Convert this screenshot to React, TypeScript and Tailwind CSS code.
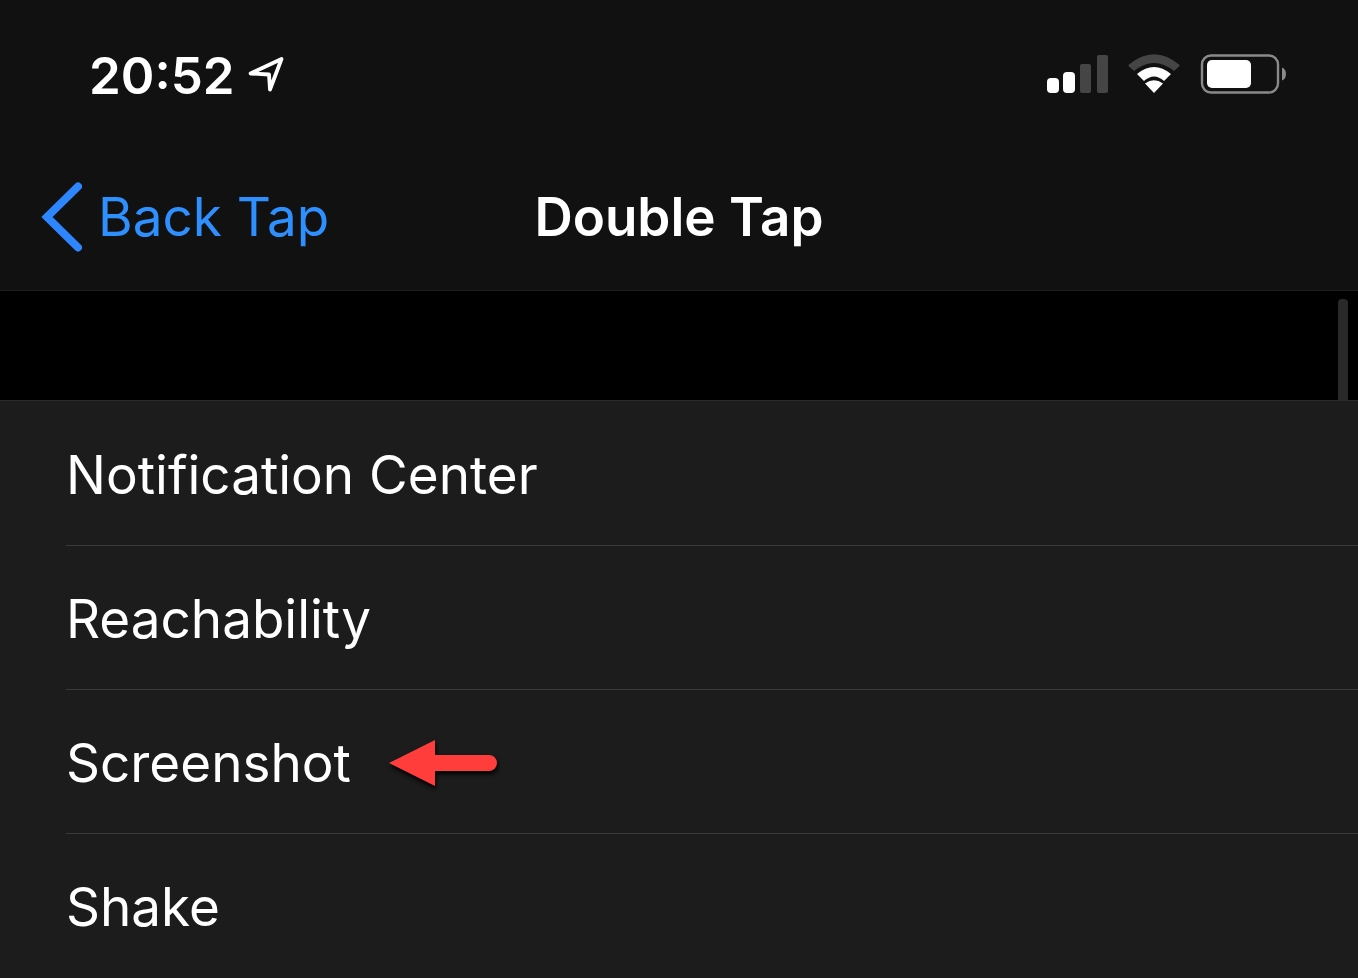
import React from 'react';

type RowProps = {
    label: string;
    first?: boolean;
    marked?: boolean;
};

const StatusIcons: React.FC = () => (
    <div className="flex items-center gap-5">
        <svg className="h-10 w-[62px]" viewBox="0 0 62 40" role="img" aria-label="Signal">
            <rect x="1" y="24" width="12" height="15" rx="4" fill="#fff" />
            <rect x="17" y="18" width="12" height="21" rx="4" fill="#fff" />
            <rect x="34" y="10" width="11" height="29" rx="2" fill="#454545" />
            <rect x="51" y="1" width="11" height="38" rx="2" fill="#454545" />
        </svg>
        <svg className="h-10 w-[52px]" viewBox="0 0 52 40" role="img" aria-label="Wi-Fi">
            <path d="M1 10.5 Q26 -10 51 10.5 Q52 11.5 51 12.5 L46 17 Q26 1 6 17 L1 12.5 Q0 11.5 1 10.5 Z" fill="#454545" />
            <path d="M9 20 Q26 6 43 20 L36 27 Q26 18 16 27 Z" fill="#fff" />
            <path d="M17 29.5 Q26 23 35 29.5 L26 39 Z" fill="#fff" />
        </svg>
        <svg className="h-10 w-[87px]" viewBox="0 0 87 40" role="img" aria-label="Battery">
            <rect x="2" y="1.5" width="76" height="37" rx="9" fill="none" stroke="#8a8a8a" strokeWidth="2.4" />
            <rect x="7" y="6" width="44" height="28" rx="5" fill="#fff" />
            <path d="M82 13.5 Q86 15 86 20 Q86 25 82 26.5 Z" fill="#8a8a8a" />
        </svg>
    </div>
);

const Row: React.FC<RowProps> = (props) => (
    <li className="pl-[66px]">
        <button
            type="button"
            className={`flex h-36 w-full items-center gap-[38px] border-t pt-1 text-left ${props.first ? "border-transparent" : "border-[#3a3a39]"}`}
        >
            <span>{props.label}</span>
            {props.marked && (
                <svg className="h-12 w-[110px] drop-shadow-[1px_3px_2px_#000000]" viewBox="0 0 110 48" aria-hidden="true">
                    <path d="M0 23 L46 0 V15 H100 A8 8 0 0 1 100 31 H46 V46 Z" fill="#ff3e3b" />
                </svg>
            )}
        </button>
    </li>
);

const App: React.FC = () => {
    return (
        <div className="flex min-h-screen flex-col bg-[#1d1c1c] font-['Inter',sans-serif] text-[53px] leading-none text-white">
            <header className="border-b border-[#1e1e1e] bg-[#121111]">
                <div className="flex h-[148px] items-center justify-between pl-[89px] pr-[71px]">
                    <div className="flex items-center gap-3 pt-0.5">
                        <span className="text-[51px] font-semibold">20:52</span>
                        <svg className="h-10 w-10" viewBox="0 0 40 40" role="img" aria-label="Location">
                            <path
                                d="M3.5 18.5 L34.5 4 L23 34.5 L22 19.5 Z"
                                fill="none"
                                stroke="#fff"
                                strokeWidth="3.8"
                                strokeLinejoin="round"
                            />
                        </svg>
                    </div>
                    <StatusIcons />
                </div>
                <nav className="grid h-[142px] grid-cols-[1fr_auto_1fr] items-center pl-10 pr-10 pb-1">
                    <a href="#back" className="flex items-center gap-4 text-[#2e8fff]">
                        <svg className="h-[70px] w-[42px]" viewBox="0 0 42 70" aria-hidden="true">
                            <path
                                d="M38 4.5 L7 35 L38 65.5"
                                fill="none"
                                stroke="#2e86ff"
                                strokeWidth="8"
                                strokeLinecap="round"
                            />
                        </svg>
                        Back Tap
                    </a>
                    <h1 className="font-semibold">Double Tap</h1>
                </nav>
            </header>
            <div className="flex h-[109px] justify-end bg-black pr-[10px] pt-2">
                <div className="w-[10px] rounded-t-sm bg-[#2a2928]" />
            </div>
            <ul className="border-t border-[#2c2c2b]">
                <Row label="Notification Center" first />
                <Row label="Reachability" />
                <Row label="Screenshot" marked />
                <Row label="Shake" />
            </ul>
        </div>
    );
};

export default App;
